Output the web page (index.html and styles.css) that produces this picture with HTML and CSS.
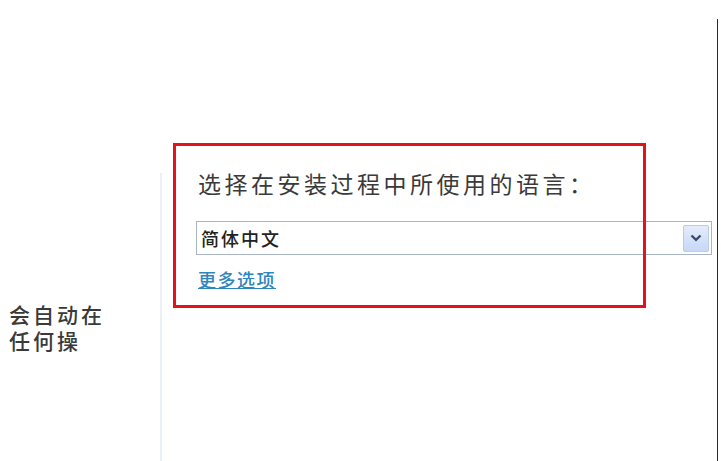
FILE: index.html
```html
<!DOCTYPE html>
<html lang="zh-CN">
<head>
    <meta charset="UTF-8">
    <title>安装语言</title>
    <link rel="stylesheet" href="styles.css">
</head>
<body>

<!-- Left column, cut off by the screenshot edge -->
<div class="side">
    <div class="side-line">会自动在</div>
    <div class="side-line">任何操</div>
</div>

<div class="rule"></div>

<!-- Language picker, marked with a red box -->
<div class="main">
    <div class="panel">
        <div class="prompt">选择在安装过程中所使用的语言：</div>
        <div class="combo">
            <span class="combo-text">简体中文</span>
            <span class="combo-button">
                <svg width="12" height="8" viewBox="0 0 12 8">
                    <path d="M1.5 1.5 L6 5.8 L10.5 1.5" fill="none" stroke="#3b4b6b" stroke-width="2.4"/>
                </svg>
            </span>
        </div>
        <a class="more" href="#">更多选项</a>
    </div>
</div>

<div class="edge"></div>

</body>
</html>
```

FILE: styles.css
```css
/* Base */
body {
    margin: 0;
    height: 461px;
    overflow: hidden;
    display: flex;
    background: #fff;
    font-family: "Noto Sans CJK SC", "Noto Sans", sans-serif;
    color: #333;
}

/* Left column text */
.side {
    width: 160px;
    overflow: hidden;
    padding-top: 301px;
    flex-shrink: 0;
}

.side-line {
    font-size: 21px;
    line-height: 26px;
    letter-spacing: 3px;
    padding-left: 9px;
    white-space: nowrap;
    font-weight: 500;
    color: #3a3a3a;
}

/* Thin divider between columns */
.rule {
    width: 2px;
    margin-top: 173px;
    background: #eaf0f5;
    flex-shrink: 0;
}

/* Main column */
.main {
    position: relative;
    flex: 1;
    padding-top: 168px;
}

.panel {
    padding-left: 36px;
}

.prompt {
    font-size: 23px;
    line-height: 30px;
    letter-spacing: 3.5px;
    color: #3a3a3a;
}

.combo {
    margin-top: 23px;
    margin-left: -2px;
    width: 514px;
    height: 32px;
    border: 1px solid #a7b5c6;
    display: flex;
    align-items: center;
    justify-content: space-between;
    background: #fff;
}

.combo-text {
    font-size: 18px;
    padding-left: 4px;
    letter-spacing: 2px;
    font-weight: 500;
    color: #222;
}

.combo-button {
    width: 24px;
    height: 25px;
    margin-right: 2px;
    border: 1px solid #b9cbe6;
    border-radius: 2px;
    background: linear-gradient(#e3ecfb, #c7d8f6);
    display: flex;
    align-items: center;
    justify-content: center;
}

.more {
    display: inline-block;
    margin-top: 12px;
    font-size: 18px;
    line-height: 24px;
    letter-spacing: 1.5px;
    font-weight: 500;
    color: #2f86bd;
    text-decoration: underline;
}

/* Red annotation box drawn over the content */
.main::after {
    content: "";
    position: absolute;
    left: 11px;
    top: 143px;
    width: 467px;
    height: 159px;
    border: 3px solid #e3121b;
}

/* Dark right border */
.edge {
    width: 1px;
    margin-top: 19px;
    margin-right: 3px;
    background: #2a2a2a;
    flex-shrink: 0;
}
```
